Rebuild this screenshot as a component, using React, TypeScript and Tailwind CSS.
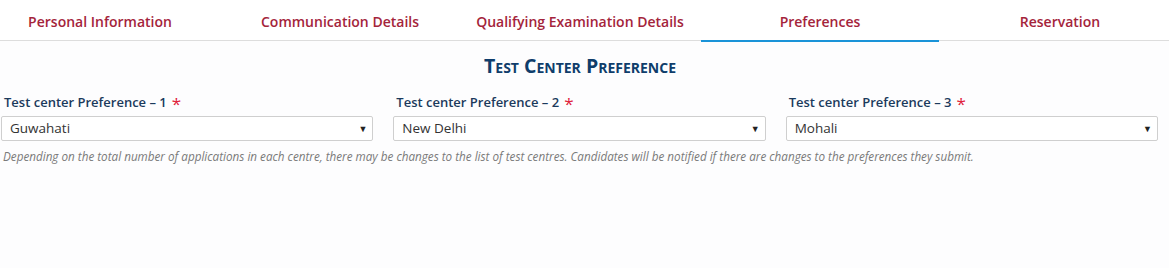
import React from "react";

const tabs = [
  "Personal Information",
  "Communication Details",
  "Qualifying Examination Details",
  "Preferences",
  "Reservation",
];

const prefs = [
  { n: 1, v: "Guwahati" },
  { n: 2, v: "New Delhi" },
  { n: 3, v: "Mohali" },
];

export default function App() {
  return (
    <div className="min-h-screen w-[1169px] bg-[#fdfdfe] font-['Open_Sans',sans-serif] overflow-hidden">
      <div className="border-b border-[#dddddd] h-[41px] bg-white">
        <div className="-ml-5 flex">
          {tabs.map((t, i) => (
            <div key={t} className="w-[240px] shrink-0 flex flex-col">
              <div className="h-[40px] pt-[2px] flex items-center justify-center text-[14px] font-semibold text-[#a4243b]">
                {t}
              </div>
              {i === 3 && <div className="h-[2px] mx-[1px] bg-[#1a93d8]" />}
            </div>
          ))}
        </div>
      </div>
      <div className="pt-[12px] px-[1px] pb-[40px]">
        <h2 className="text-center pr-[9px] text-[19.5px] font-bold text-[#0f3d6b] [font-variant:small-caps] leading-[26px]">
          Test Center Preference
        </h2>
        <div className="mt-[12px] grid grid-cols-3 gap-x-[20px] w-[1157px]">
          {prefs.map((p) => (
            <div key={p.n} className="flex flex-col">
              <label className="pl-[3px] text-[13px] font-semibold text-[#1b3a5c] leading-[18px] flex items-center">
                <span>Test center Preference – {p.n}</span>
                <span className="ml-[5px] text-[#e0213a] text-[17px] leading-[18px] pt-[4px] font-normal">*</span>
              </label>
              <div className="mt-[3px] h-[25px] border border-[#cfcfcf] rounded-[2px] bg-white flex items-center justify-between pl-[8px] pr-[5px] text-[13.5px] text-[#333333]">
                <span>{p.v}</span>
                <span className="text-[9px] text-[#222]">▼</span>
              </div>
            </div>
          ))}
        </div>
        <p className="mt-[7px] pl-[2px] text-[11.7px] italic text-[#7a7a7a] leading-[16px]">
          Depending on the total number of applications in each centre, there may be changes to the list of test centres. Candidates will be notified if there are changes to the preferences they submit.
        </p>
      </div>
    </div>
  );
}
